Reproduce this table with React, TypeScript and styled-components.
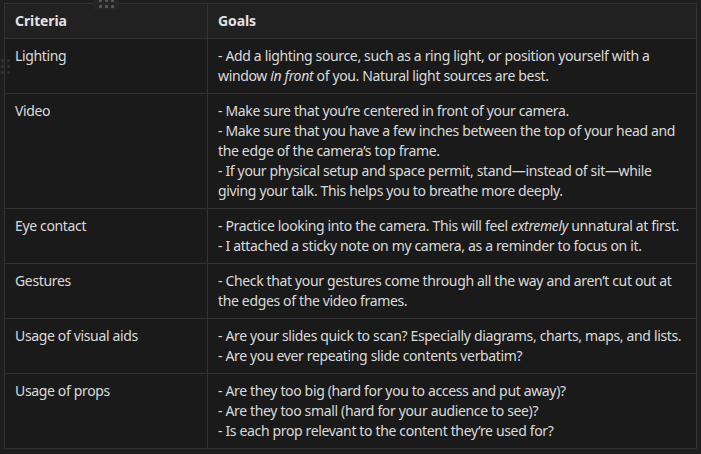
import React from 'react';
import styled, { createGlobalStyle } from 'styled-components';

const GlobalStyle = createGlobalStyle`
  html, body {
    margin: 0;
    padding: 0;
    background: #1e1e1e;
  }
`;

const Page = styled.div`
  position: relative;
  width: 701px;
  height: 454px;
  padding: 3px 4px;
  box-sizing: border-box;
  background: #1e1e1e;
  font-family: "Noto Sans", "Open Sans", sans-serif;
  font-size: 14px;
  line-height: 20px;
  letter-spacing: -0.35px;
  color: #dadada;
`;

const Table = styled.table`
  width: 693px;
  border-collapse: collapse;
  table-layout: fixed;
  background: #1a1a1a;
`;

const HeadCell = styled.th<{ $width?: number }>`
  box-sizing: border-box;
  width: ${({ $width }) => ($width ? `${$width}px` : 'auto')};
  padding: 7px 10px;
  border: 1px solid #333333;
  background: #212121;
  text-align: left;
  font-weight: 700;
  letter-spacing: -0.1px;
  color: #e2e2e2;
`;

const Cell = styled.td`
  padding: 7px 10px;
  border: 1px solid #333333;
  vertical-align: top;
`;

const Line = styled.div``;

const Grip = styled.div`
  position: absolute;
  top: -4px;
  left: 93px;
  width: 26px;
  height: 14px;
  border-radius: 4px;
  background: #262626;
  display: grid;
  grid-template-columns: repeat(3, 3px);
  grid-auto-rows: 3px;
  gap: 3px;
  justify-content: center;
  align-content: end;
  padding-bottom: 2px;
  box-sizing: border-box;
`;

const SideGrip = styled(Grip)`
  top: 57px;
  left: -2px;
  width: 14px;
  height: 20px;
  background: transparent;
  grid-template-columns: repeat(2, 3px);
  align-content: center;
  opacity: 0.35;
`;

const Dot = styled.span`
  width: 3px;
  height: 3px;
  border-radius: 1px;
  background: #5a5a5a;
`;

type Row = { criteria: string; goals: React.ReactNode[] };

const rows: Row[] = [
  {
    criteria: 'Lighting',
    goals: [
      <>
        - Add a lighting source, such as a ring light, or position yourself with a window <em>in front</em> of you. Natural light sources are best.
      </>,
    ],
  },
  {
    criteria: 'Video',
    goals: [
      '- Make sure that you’re centered in front of your camera.',
      '- Make sure that you have a few inches between the top of your head and the edge of the camera’s top frame.',
      '- If your physical setup and space permit, stand—instead of sit—while giving your talk. This helps you to breathe more deeply.',
    ],
  },
  {
    criteria: 'Eye contact',
    goals: [
      <>
        - Practice looking into the camera. This will feel <em>extremely</em> unnatural at first.
      </>,
      '- I attached a sticky note on my camera, as a reminder to focus on it.',
    ],
  },
  {
    criteria: 'Gestures',
    goals: [
      '- Check that your gestures come through all the way and aren’t cut out at the edges of the video frames.',
    ],
  },
  {
    criteria: 'Usage of visual aids',
    goals: [
      '- Are your slides quick to scan? Especially diagrams, charts, maps, and lists.',
      '- Are you ever repeating slide contents verbatim?',
    ],
  },
  {
    criteria: 'Usage of props',
    goals: [
      '- Are they too big (hard for you to access and put away)?',
      '- Are they too small (hard for your audience to see)?',
      '- Is each prop relevant to the content they’re used for?',
    ],
  },
];

export default function App() {
  return (
    <>
      <GlobalStyle />
      <Page>
        <Grip>
          {Array.from({ length: 6 }).map((_, i) => (
            <Dot key={i} />
          ))}
        </Grip>
        <SideGrip>
          {Array.from({ length: 6 }).map((_, i) => (
            <Dot key={i} />
          ))}
        </SideGrip>
        <Table>
          <thead>
            <tr>
              <HeadCell $width={203}>Criteria</HeadCell>
              <HeadCell>Goals</HeadCell>
            </tr>
          </thead>
          <tbody>
            {rows.map((row) => (
              <tr key={row.criteria}>
                <Cell>{row.criteria}</Cell>
                <Cell>
                  {row.goals.map((g, i) => (
                    <Line key={i}>{g}</Line>
                  ))}
                </Cell>
              </tr>
            ))}
          </tbody>
        </Table>
      </Page>
    </>
  );
}
